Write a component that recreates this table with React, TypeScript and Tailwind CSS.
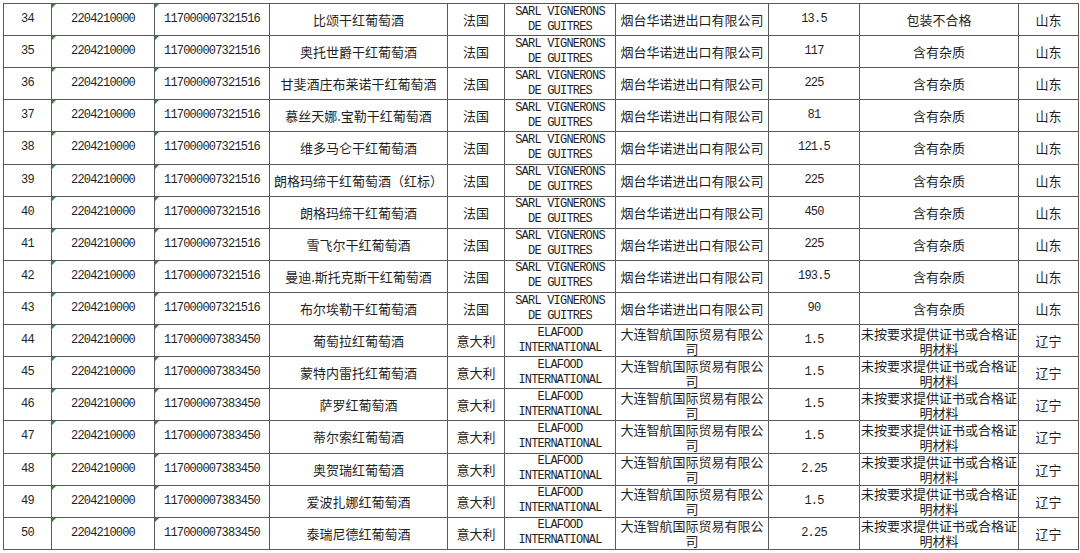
import React from 'react';

type Row = {
  no: number;
  code: string;
  name: string;
  country: string;
  exporter: string[];
  importer: string;
  amount: string;
  reason: string;
  province: string;
};

const FR_EXP = ['SARL VIGNERONS', 'DE GUITRES'];
const IT_EXP = ['ELAFOOD', 'INTERNATIONAL'];
const YT = '烟台华诺进出口有限公司';
const DL = '大连智航国际贸易有限公司';
const BAD_DOC = '未按要求提供证书或合格证明材料';

const fr = (no: number, name: string, amount: string, reason = '含有杂质'): Row => ({
  no,
  code: '117000007321516',
  name,
  country: '法国',
  exporter: FR_EXP,
  importer: YT,
  amount,
  reason,
  province: '山东',
});

const it = (no: number, name: string, amount: string): Row => ({
  no,
  code: '117000007383450',
  name,
  country: '意大利',
  exporter: IT_EXP,
  importer: DL,
  amount,
  reason: BAD_DOC,
  province: '辽宁',
});

const rows: Row[] = [
  fr(34, '比颂干红葡萄酒', '13.5', '包装不合格'),
  fr(35, '奥托世爵干红葡萄酒', '117'),
  fr(36, '甘斐酒庄布莱诺干红葡萄酒', '225'),
  fr(37, '慕丝天娜.宝勒干红葡萄酒', '81'),
  fr(38, '维多马仑干红葡萄酒', '121.5'),
  fr(39, '朗格玛缔干红葡萄酒（红标）', '225'),
  fr(40, '朗格玛缔干红葡萄酒', '450'),
  fr(41, '雪飞尔干红葡萄酒', '225'),
  fr(42, '曼迪.斯托克斯干红葡萄酒', '193.5'),
  fr(43, '布尔埃勒干红葡萄酒', '90'),
  it(44, '葡萄拉红葡萄酒', '1.5'),
  it(45, '蒙特内雷托红葡萄酒', '1.5'),
  it(46, '萨罗红葡萄酒', '1.5'),
  it(47, '蒂尔索红葡萄酒', '1.5'),
  it(48, '奥贺瑞红葡萄酒', '2.25'),
  it(49, '爱波扎娜红葡萄酒', '1.5'),
  it(50, '泰瑞尼德红葡萄酒', '2.25'),
];

function Cell({
  children,
  mono,
  flag,
}: {
  children: React.ReactNode;
  mono?: boolean;
  flag?: boolean;
}) {
  return (
    <div
      className={`relative bg-white flex items-center justify-center text-center text-[#1f1f1f] overflow-hidden ${
        mono
          ? "font-['Liberation_Mono',monospace] text-[12px] tracking-[-0.8px] leading-[15px]"
          : "font-['Noto_Sans_CJK_SC',sans-serif] text-[13px] leading-[15px]"
      }`}
    >
      {/* excel "number as text" marker */}
      {flag && (
        <span className="absolute top-0 left-0 w-0 h-0 border-t-[4px] border-r-[4px] border-t-[#2f8a2f] border-r-transparent" />
      )}
      <div>{children}</div>
    </div>
  );
}

export default function App() {
  return (
    <div className="w-[1080px] h-[553px] bg-white pt-[3px] pl-[3px]">
      <div className="inline-grid grid-cols-[47px_102px_114px_177px_56px_110px_152px_90px_158px_59px] auto-rows-[31.12px] gap-px p-px bg-[#5a5a5a]">
        {rows.map((r) => (
          <React.Fragment key={r.no}>
            <Cell mono>{r.no}</Cell>
            <Cell mono flag>
              2204210000
            </Cell>
            <Cell mono flag>
              {r.code}
            </Cell>
            <Cell>{r.name}</Cell>
            <Cell>{r.country}</Cell>
            <Cell mono>
              {r.exporter[0]}
              <br />
              {r.exporter[1]}
            </Cell>
            <Cell>{r.importer}</Cell>
            <Cell mono>{r.amount}</Cell>
            <Cell>{r.reason}</Cell>
            <Cell>{r.province}</Cell>
          </React.Fragment>
        ))}
      </div>
    </div>
  );
}
